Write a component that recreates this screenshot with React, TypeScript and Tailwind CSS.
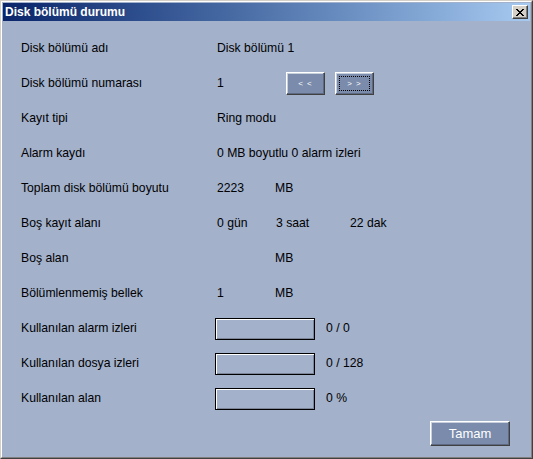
import React from "react";

const font = { fontFamily: '"Liberation Sans", Arial, sans-serif' };

function NavButton({ label, focused }: { label: string; focused?: boolean }) {
  return (
    <div className="w-[39px] h-[23px] border border-t-white border-l-white border-r-[#404040] border-b-[#404040] bg-[#7a8bab] shadow-[inset_-1px_-1px_0_#5d6a82,inset_1px_1px_0_#c8d0de] flex items-center justify-center relative">
      <span className="text-[8px] leading-none text-white tracking-[1px]">{label}</span>
      {focused && (
        <div className="absolute inset-[3px] border border-dotted border-black" />
      )}
    </div>
  );
}

function Box() {
  return (
    <div className="w-[100px] h-[22px] border border-black shadow-[inset_1px_1px_0_#ffffff,inset_-1px_-1px_0_#7d8699] bg-[#a3b1cb]" />
  );
}

function Row({ label, children }: { label: string; children?: React.ReactNode }) {
  return (
    <div className="h-[35px] flex items-center">
      <div className="w-[196px] shrink-0">{label}</div>
      <div className="flex items-center">{children}</div>
    </div>
  );
}

function BoxRow({ label, value }: { label: string; value: string }) {
  return (
    <div className="h-[35px] flex items-center">
      <div className="w-[194px] shrink-0">{label}</div>
      <Box />
      <span className="ml-[11px]">{value}</span>
    </div>
  );
}

export default function App() {
  return (
    <div
      className="w-[533px] h-[459px] border border-t-[#d4d0c8] border-l-[#d4d0c8] border-r-[#404040] border-b-[#404040] bg-[#a3b1cb]"
      style={font}
    >
      <div className="h-full border border-t-white border-l-white border-r-[#808080] border-b-[#808080] p-px flex flex-col">
        <div className="h-[18px] shrink-0 flex items-center justify-between bg-gradient-to-r from-[#0a246a] to-[#a6caf0] pl-[2px] pr-[2px]">
          <span className="text-white font-bold text-[12px] leading-none">Disk bölümü durumu</span>
          <div className="w-[16px] h-[14px] bg-[#d4d0c8] border border-t-white border-l-white border-r-[#404040] border-b-[#404040] shadow-[inset_-1px_-1px_0_#808080] flex items-center justify-center">
            <svg width="8" height="7" viewBox="0 0 8 7" shapeRendering="crispEdges">
              <path d="M0 0h2v1h-2zM6 0h2v1h-2zM1 1h2v1h-2zM5 1h2v1h-2zM2 2h4v1h-4zM3 3h2v1h-2zM2 4h4v1h-4zM1 5h2v1h-2zM5 5h2v1h-2zM0 6h2v1h-2zM6 6h2v1h-2z" fill="#000" />
            </svg>
          </div>
        </div>
        <div className="flex-1 flex flex-col pl-[18px] pt-[10px] text-[12.2px] text-black leading-none">
          <Row label="Disk bölümü adı">
            <span>Disk bölümü 1</span>
          </Row>
          <Row label="Disk bölümü numarası">
            <span className="w-[69px]">1</span>
            <div className="flex gap-[10px]">
              <NavButton label="< <" />
              <NavButton label="> >" focused />
            </div>
          </Row>
          <Row label="Kayıt tipi">
            <span>Ring modu</span>
          </Row>
          <Row label="Alarm kaydı">
            <span>0 MB boyutlu 0 alarm izleri</span>
          </Row>
          <Row label="Toplam disk bölümü boyutu">
            <span className="w-[58px]">2223</span>
            <span>MB</span>
          </Row>
          <Row label="Boş kayıt alanı">
            <span className="w-[59px]">0 gün</span>
            <span className="w-[74px]">3 saat</span>
            <span>22 dak</span>
          </Row>
          <Row label="Boş alan">
            <span className="w-[58px]"></span>
            <span>MB</span>
          </Row>
          <Row label="Bölümlenmemiş bellek">
            <span className="w-[58px]">1</span>
            <span>MB</span>
          </Row>
          <BoxRow label="Kullanılan alarm izleri" value="0 / 0" />
          <BoxRow label="Kullanılan dosya izleri" value="0 / 128" />
          <BoxRow label="Kullanılan alan" value="0 %" />
          <div className="flex justify-end pr-[20px] pt-[5px]">
            <div className="w-[80px] h-[25px] border border-t-white border-l-white border-r-[#404040] border-b-[#404040] bg-[#7a8bab] shadow-[inset_-1px_-1px_0_#5d6a82,inset_1px_1px_0_#c8d0de] flex items-center justify-center">
              <span className="text-white text-[13px] leading-none">Tamam</span>
            </div>
          </div>
        </div>
      </div>
    </div>
  );
}
